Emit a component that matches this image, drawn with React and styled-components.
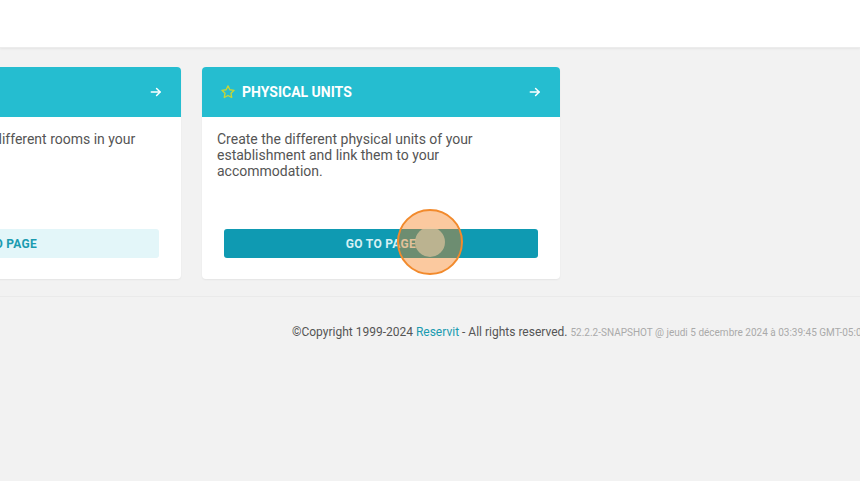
import React from "react";
import styled, { createGlobalStyle } from "styled-components";

const Global = createGlobalStyle`
  html, body { margin: 0; padding: 0; }
  body {
    background: #f2f2f2;
    font-family: Roboto, "Noto Sans", Arial, sans-serif;
    overflow: hidden;
  }
`;

const Page = styled.div`
  position: relative;
  width: 860px;
  height: 481px;
  overflow: hidden;
  background: #f2f2f2;
`;

const TopBar = styled.header`
  height: 48px;
  background: #ffffff;
  box-shadow: 0 1px 2px rgba(0, 0, 0, 0.06);
  border-bottom: 1px solid #ececec;
  box-sizing: border-box;
`;

const CardRow = styled.div`
  display: flex;
  gap: 21px;
  margin-left: -177px;
  padding-top: 19px;
  padding-bottom: 17px;
  border-bottom: 1px solid #eaeaea;
`;

const Card = styled.section`
  width: 358px;
  height: 212px;
  flex: none;
  background: #fff;
  border-radius: 4px;
  overflow: hidden;
  box-shadow: 0 1px 2px rgba(0, 0, 0, 0.06);
  display: flex;
  flex-direction: column;
`;

const CardHeader = styled.div`
  height: 50px;
  background: #25bdd0;
  display: flex;
  align-items: center;
  padding: 0 18px 0 18px;
  gap: 6px;
  color: #fff;
`;

const Title = styled.h2`
  margin: 0;
  flex: 1;
  font-size: 14px;
  font-weight: 700;
  text-transform: uppercase;
`;

const CardBody = styled.div`
  flex: 1;
  display: flex;
  flex-direction: column;
  padding: 14px 22px 21px 15px;
`;

const Text = styled.p`
  margin: 0;
  font-size: 14px;
  line-height: 16px;
  color: #555;
  flex: 1;
  padding-right: 14px;
`;

const Button = styled.button`
  height: 29px;
  margin-left: 7px;
  border: none;
  border-radius: 3px;
  font-family: inherit;
  font-size: 12px;
  font-weight: 700;
  letter-spacing: 0.3px;
  cursor: pointer;
  background: ${(p) => (p.$primary ? "#0f9ab2" : "#e3f6f9")};
  color: ${(p) => (p.$primary ? "#d6f1f5" : "#1a9bb0")};
`;

const Footer = styled.footer`
  padding: 27px 0 0 292px;
  white-space: nowrap;
  font-size: 12px;
  color: #555;
  line-height: 16px;
`;

const Link = styled.a`
  color: #1a9bb0;
  text-decoration: none;
`;

const Version = styled.span`
  font-size: 10px;
  color: #aaa;
`;

const Cursor = styled.div`
  position: absolute;
  left: 397px;
  top: 209px;
  width: 62px;
  height: 62px;
  border-radius: 50%;
  border: 2px solid #f28a2c;
  background: rgba(245, 123, 23, 0.41);
  display: flex;
  align-items: center;
  justify-content: center;
  pointer-events: none;
`;

const CursorDot = styled.div`
  width: 30px;
  height: 30px;
  border-radius: 50%;
  background: rgba(240, 205, 165, 0.6);
`;

const Arrow = () => (
  <svg width="14" height="14" viewBox="0 0 24 24" fill="none" stroke="#fff" strokeWidth="2.6" strokeLinecap="round" strokeLinejoin="round">
    <path d="M4 12h15" />
    <path d="M13 6l6 6-6 6" />
  </svg>
);

const Star = () => (
  <svg width="16" height="16" viewBox="0 0 24 24" fill="none" stroke="#c9d534" strokeWidth="2" strokeLinejoin="round">
    <path d="M12 2.8l2.8 5.8 6.3.9-4.6 4.4 1.1 6.3L12 17.2l-5.6 3 1.1-6.3-4.6-4.4 6.3-.9z" />
  </svg>
);

const cards = [
  {
    title: "Rooms",
    text: "Create and configure the different rooms in your establishment.",
    primary: false,
    star: false,
  },
  {
    title: "Physical units",
    text: "Create the different physical units of your establishment and link them to your accommodation.",
    primary: true,
    star: true,
  },
];

export default function App() {
  return (
    <Page>
      <Global />
      <TopBar />
      <CardRow>
        {cards.map((c) => (
          <Card key={c.title}>
            <CardHeader>
              {c.star && <Star />}
              <Title>{c.title}</Title>
              <Arrow />
            </CardHeader>
            <CardBody>
              <Text>{c.text}</Text>
              <Button $primary={c.primary}>GO TO PAGE</Button>
            </CardBody>
          </Card>
        ))}
      </CardRow>
      <Footer>
        ©Copyright 1999-2024 <Link href="#">Reservit</Link> - All rights reserved.{" "}
        <Version>52.2.2-SNAPSHOT @ jeudi 5 décembre 2024 à 03:39:45 GMT-05:00</Version>
      </Footer>
      <Cursor>
        <CursorDot />
      </Cursor>
    </Page>
  );
}
